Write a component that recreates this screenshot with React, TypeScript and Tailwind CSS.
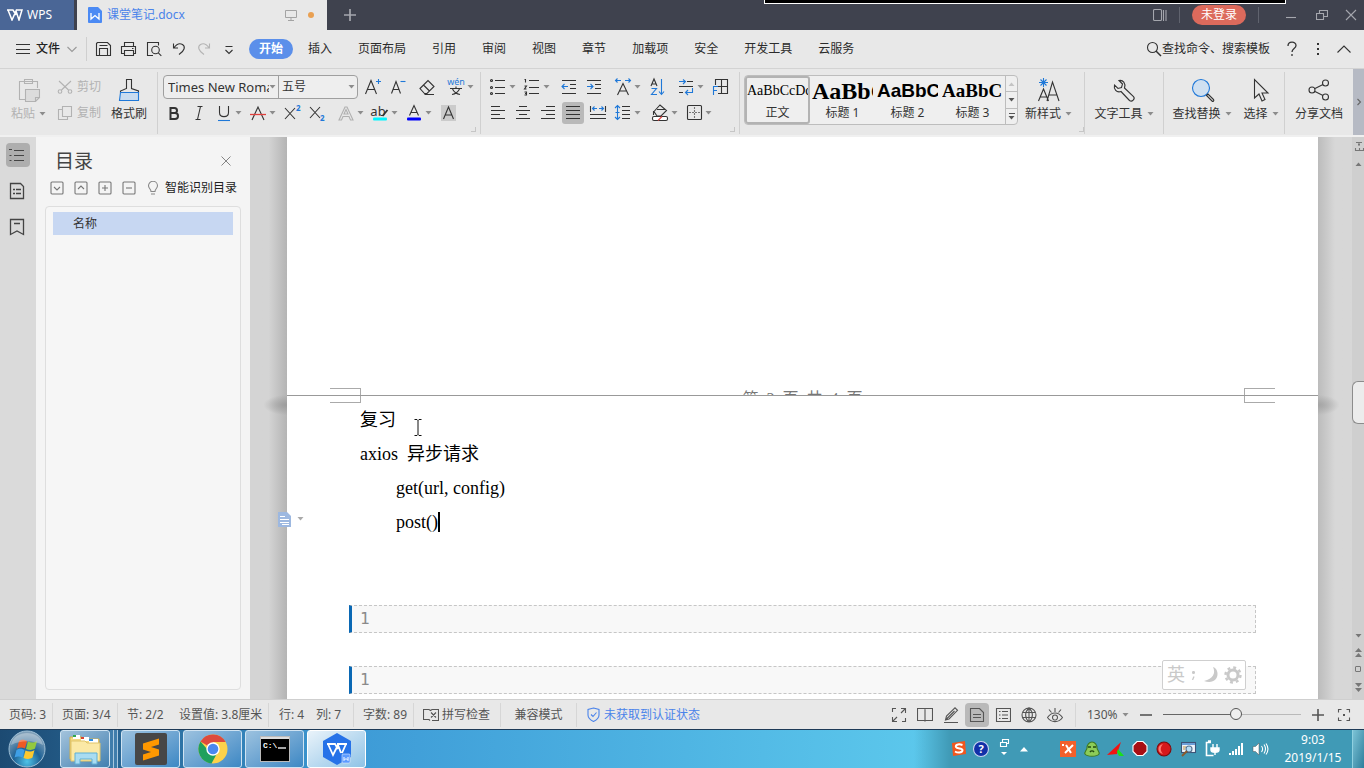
import React from 'react';
import { clsx } from 'clsx';

type IconProps = {
  size?: number;
  className?: string;
  children: React.ReactNode;
};

const Icon = ({ size = 22, className, children }: IconProps) => (
  <svg
    width={size}
    height={size}
    viewBox={`0 0 ${size} ${size}`}
    fill="none"
    stroke="currentColor"
    strokeWidth="1.1"
    className={clsx('shrink-0', className)}
    aria-hidden="true"
  >
    {children}
  </svg>
);

const Caret = ({ className }: { className?: string }) => (
  <svg width="7" height="4" viewBox="0 0 7 4" className={clsx('shrink-0', className ?? 'text-[#8c8c8c]')} aria-hidden="true">
    <path d="M0.5 0h6L3.5 3.5z" fill="currentColor" />
  </svg>
);

const BLUE = '#1f78d8';

/* ---------- toolbar icons, 22px grid ---------- */

const icons = {
  save: (
    <Icon>
      <path d="M3.5 5.5l1-1h10l3 3v10h-14zM6.5 17.5v-7h8v7M6.5 7.5h8" />
    </Icon>
  ),
  print: (
    <Icon>
      <path d="M6.5 8.5v-4h9v4M6.5 15.5h-3v-7h14v7h-2M6.5 12.5h9v5h-9zM14 10.5h1.5" />
    </Icon>
  ),
  preview: (
    <Icon>
      <path d="M10 17.500h-5.500v-13h11v3" />
      <circle cx="12.5" cy="12" r="3.8" />
      <path d="M15.3 14.8l3 3" />
    </Icon>
  ),
  undo: (
    <Icon>
      <path d="M5.5 5.5V10H10M5.8 9.8C9 5.500 12 5 14.5 6.5c3 2 2.500 6-3.500 10" />
    </Icon>
  ),
  redo: (
    <Icon className="text-[#b4b4b4]">
      <path d="M16.5 5.5V10H12M16.2 9.8C13 5.5 10 5 7.5 6.500c-3 2-2.500 6 3.500 10" />
    </Icon>
  ),
  more: (
    <Icon>
      <path d="M7.5 8.5h7M7.5 12l3.500 3.500 3.500-3.500" />
    </Icon>
  ),
  growFont: (
    <Icon>
      <path d="M3.5 18L9 4.500 14.500 18M5.300 13.500h7.400" />
      <path d="M16.5 3v5M14 5.5h5" stroke={BLUE} />
    </Icon>
  ),
  shrinkFont: (
    <Icon>
      <path d="M4.5 17.5L9 5.500l4.500 12M6 13.500h6" />
      <path d="M13.5 5.5h5" stroke={BLUE} />
    </Icon>
  ),
  eraser: (
    <Icon>
      <path d="M4 12.5l8-8 6 6-7 7H8.500zM7.500 9l6 6M8.500 18.500H18" />
    </Icon>
  ),
  pinyin: (
    <Icon>
      <text x="11" y="9" textAnchor="middle" fontSize="9" fill={BLUE} stroke="none">
        wén
      </text>
      <path d="M5 12.5h12M11 10.5v2M7.5 13c1.500 3 4 5 7.500 5.500M14.500 13c-1.500 3-4 5-7.500 5.500" />
    </Icon>
  ),
  bold: (
    <Icon>
      <path d="M7.5 6v11H12a3 3 0 000-6H7.500h4a2.500 2.500 0 000-5z" strokeWidth="2" />
    </Icon>
  ),
  italic: (
    <Icon>
      <path d="M9.5 4.5h5M7.5 17.5h5M12.5 4.5l-3 13" />
    </Icon>
  ),
  underline: (
    <Icon>
      <path d="M6.5 4v6.500c0 5.500 9 5.500 9 0V4" />
      <path d="M5 18.5h12" stroke={BLUE} />
    </Icon>
  ),
  strike: (
    <Icon>
      <path d="M5 18L11 5l6 13" />
      <path d="M3 12.500h16" stroke="#e0403c" strokeWidth="1.3" />
    </Icon>
  ),
  superscript: (
    <Icon>
      <path d="M4 6l10 11M14 6L4 17" />
      <text x="15" y="9" fontSize="8" fontWeight="bold" fill={BLUE} stroke="none">2</text>
    </Icon>
  ),
  subscript: (
    <Icon>
      <path d="M4 5l10 11M14 5L4 16" />
      <text x="14" y="19" fontSize="8" fontWeight="bold" fill={BLUE} stroke="none">2</text>
    </Icon>
  ),
  textEffect: (
    <Icon className="text-[#b0b0b0]">
      <path d="M4 18L10 5h2l6 13h-2.500L14 14.500H8L6.500 18zM9 12h4l-2-4.500z" />
    </Icon>
  ),
  highlight: (
    <Icon>
      <text x="9" y="14" textAnchor="middle" fontSize="13" fill="#333" stroke="none">ab</text>
      <path d="M13.5 14l5-6" strokeWidth="1.8" />
      <rect x="4" y="15.5" width="14" height="3" rx="1" fill="#00f6ff" stroke="none" />
    </Icon>
  ),
  fontColor: (
    <Icon>
      <path d="M6.5 13.5L11 3.500l4.500 10M8 10.500h6" />
      <rect x="4" y="15.5" width="14" height="3" rx="1" fill="#0000fa" stroke="none" />
    </Icon>
  ),
  shading: (
    <Icon>
      <rect x="4" y="3" width="15" height="16" fill="#cbcbcb" stroke="none" />
      <path d="M6.5 17l5-12 5 12M8.300 13h6.400" />
    </Icon>
  ),
  bullets: (
    <Icon>
      <path d="M8 4.5h10M8 11.5h10M8 17.5h10" />
      <circle cx="4.5" cy="4.5" r="1" />
      <circle cx="4.5" cy="11.5" r="1" />
      <circle cx="4.5" cy="17.5" r="1" />
    </Icon>
  ),
  numbered: (
    <Icon>
      <path d="M8 4.5h10M8 11.5h10M8 17.5h10" />
      <path d="M3.5 3.5h1v3M3.5 10h2l-2 3h2M3.5 16h2v3h-2M4 17.5h1.500" />
    </Icon>
  ),
  outdent: (
    <Icon>
      <path d="M4 4.5h14M12 8.5h6M12 12.5h6M4 17.5h14" />
      <path d="M10 10.5H4M6.5 8L4 10.500 6.500 13" stroke={BLUE} />
    </Icon>
  ),
  indent: (
    <Icon>
      <path d="M4 4.5h14M12 8.5h6M12 12.5h6M4 17.5h14" />
      <path d="M4 10.5h6M7.5 8l2.500 2.500L7.500 13" stroke={BLUE} />
    </Icon>
  ),
  textScale: (
    <Icon>
      <path d="M5.5 19L11 7.500 16.500 19M7.500 15h7" />
      <path d="M9 4.5H3.5M5.5 2.5l-2 2 2 2M13 4.5h5.500M16.500 2.500l2 2-2 2" stroke={BLUE} />
    </Icon>
  ),
  sort: (
    <Icon>
      <path d="M5 10l3-7 3 7M6 8h4" />
      <path d="M5.5 12.5h5l-5 6H11M15.5 3v15M13 15.5l2.500 3 2.500-3" stroke={BLUE} />
    </Icon>
  ),
  tabs: (
    <Icon>
      <path d="M12 5.5h6M4 10.5h14M4 16.5h4" />
      <path d="M4 5.5h6M8 3.500l2.500 2L8 8M17.500 12v4.500H11M13 14l-2.500 2.500L13 19" stroke={BLUE} />
    </Icon>
  ),
  tableGrid: (
    <Icon>
      <path d="M6.5 9V3.5h12v14H9M12.5 3.5v14M9 10.5h9.500" />
      <path d="M4.5 19v-8.500H9M4.5 14.500H8" stroke={BLUE} />
    </Icon>
  ),
  alignLeft: (
    <Icon>
      <path d="M4 4.5h9M4 8.5h14M4 12.5h9M4 16.5h14" />
    </Icon>
  ),
  alignCenter: (
    <Icon>
      <path d="M7 4.5h8M4 8.5h14M7 12.5h8M4 16.5h14" />
    </Icon>
  ),
  alignRight: (
    <Icon>
      <path d="M9 4.5h9M4 8.5h14M9 12.5h9M4 16.5h14" />
    </Icon>
  ),
  justify: (
    <Icon>
      <path d="M4 4.5h14M4 8.5h14M4 12.5h14M4 16.5h14" />
    </Icon>
  ),
  distribute: (
    <Icon>
      <path d="M3.5 4v6M18.5 4v6M3 12.5h16M3 16.5h16" />
      <path d="M10 6.5H5.5M7.500 4.500l-2 2 2 2M12 6.500h4.500M14.500 4.500l2 2-2 2" stroke={BLUE} />
    </Icon>
  ),
  lineSpacing: (
    <Icon>
      <path d="M10 4.5h8M10 8.5h8M10 12.5h8M10 16.5h8" />
      <path d="M5.5 4v13M3 6l2.500-2.500L8 6M3 15l2.500 2.500L8 15M3.500 10.500h4" stroke={BLUE} />
    </Icon>
  ),
  bucket: (
    <Icon>
      <path d="M5 9.500l6-6.500 6.500 5.500L12 14H8zM8 7.500h8.500M4.500 9v4" />
      <rect x="3.5" y="14.5" width="15" height="4" rx="1.5" fill="#fff" />
      <path d="M9 18.5l4-4" stroke="#e0403c" />
    </Icon>
  ),
  borders: (
    <Icon>
      <rect x="4.5" y="3.5" width="14" height="14" rx="1" />
      <path d="M11.5 5v11M6 10.5h11" strokeDasharray="2 1" stroke="#777" />
    </Icon>
  ),
};

/* ---------- title bar ---------- */

const WpsMark = () => (
  <svg width="16" height="12" viewBox="0 0 16 12" fill="none" stroke="currentColor" strokeWidth="1.5" aria-hidden="true">
    <path d="M0 1h6l3 5M1 1l4 10 4-9 3 9 3-10H9" />
  </svg>
);

const TitleBar = () => (
  <header className="flex h-[30px] shrink-0 bg-[#3f424e] text-[#a5a7ae]">
    <button className="flex w-[74px] items-center gap-1 bg-[#4a6696] pl-[7px] text-white">
      <WpsMark />
      <span>WPS</span>
    </button>
    <div className="ml-[3px] flex w-[250px] items-center bg-[#e8e8e8] pl-[11px] pr-[13px] text-[#4a83ea]">
      <svg width="14" height="16" viewBox="0 0 14 16" aria-hidden="true">
        <path d="M1 0h9l4 4v11a1 1 0 01-1 1H1a1 1 0 01-1-1V1a1 1 0 011-1z" fill="#4b8af4" />
        <path d="M3 6v6l4-3.500 4 3.500V6" fill="none" stroke="#fff" strokeWidth="1.3" />
      </svg>
      <span className="ml-[5px] flex-1">课堂笔记.docx</span>
      <svg width="12" height="12" viewBox="0 0 12 12" fill="none" stroke="#a3a3a3" aria-hidden="true">
        <path d="M.5 1.5h11v7H.5zM6 8.5v3M3 11.5h6" />
      </svg>
      <span className="ml-[11px] size-[6px] rounded-full bg-[#e9a052]" />
    </div>
    <button aria-label="新建" className="flex w-[46px] items-center justify-center">
      <Icon size={14}>
        <path d="M1 7h12M7 1v12" strokeWidth="1.7" />
      </Icon>
    </button>
    <div className="ml-auto flex items-center">
      <button aria-label="侧栏" className="w-[38px]">
        <Icon size={14} className="mx-auto">
          <rect x=".5" y="1.5" width="8" height="11" rx="1" />
          <path d="M10.5 2v11M13 2v11" />
        </Icon>
      </button>
      <span className="h-4 w-px bg-[#60636e]" />
      <button className="mx-3 h-5 rounded-full bg-[#dc6a5c] px-[9px] text-white">未登录</button>
      <span className="h-4 w-px bg-[#60636e]" />
      <button aria-label="最小化" className="ml-4 w-[31px]">
        <Icon size={12} className="mx-auto">
          <path d="M1 8.5h10" />
        </Icon>
      </button>
      <button aria-label="还原" className="w-[31px]">
        <Icon size={12} className="mx-auto">
          <path d="M.5 4.5h7v6h-7zM3.5 4V1.5h8v6H8" />
        </Icon>
      </button>
      <button aria-label="关闭" className="w-[27px]">
        <Icon size={12} className="mx-auto">
          <path d="M1 1l10 10M11 1L1 11" />
        </Icon>
      </button>
    </div>
  </header>
);

/* ---------- menu bar ---------- */

const tabs = ['插入', '页面布局', '引用', '审阅', '视图', '章节', '加载项', '安全', '开发工具', '云服务'];

const quickTools = [
  { label: '保存', icon: icons.save },
  { label: '打印', icon: icons.print },
  { label: '打印预览', icon: icons.preview },
  { label: '撤销', icon: icons.undo },
  { label: '恢复', icon: icons.redo },
  { label: '更多', icon: icons.more },
];

const MenuBar = () => (
  <nav className="flex h-[39px] shrink-0 items-center border-b border-[#d3d3d3]">
    <button className="flex items-center pl-[15px]">
      <Icon size={16}>
        <path d="M1 3.5h14M1 8.5h14M1 12.5h14" />
      </Icon>
      <span className="ml-[5px] font-medium text-[#222]">文件</span>
      <Icon size={12} className="ml-[6px] text-[#999]">
        <path d="M1.500 4l4.500 4.500L10.500 4" />
      </Icon>
    </button>
    <span className="ml-2 mr-1 h-6 w-px bg-[#cfcfcf]" />
    {quickTools.map((t) => (
      <button key={t.label} aria-label={t.label} className="flex w-[25px] justify-center">
        {t.icon}
      </button>
    ))}
    <button className="ml-2 mr-[2px] h-5 rounded-full bg-[#5b8fea] px-[10px] font-bold text-white">开始</button>
    {tabs.map((t) => (
      <button key={t} className="px-[13px] text-[#2b2b2b]">
        {t}
      </button>
    ))}
    <label className="ml-auto flex items-center">
      <Icon size={16}>
        <circle cx="6.5" cy="6.5" r="5" />
        <path d="M10 10l5 5" strokeWidth="1.5" />
      </Icon>
      <input
        className="w-[109px] bg-transparent text-[#2b2b2b] outline-none placeholder:text-[#2b2b2b]"
        placeholder="查找命令、搜索模板"
      />
    </label>
    <div className="flex items-center pl-2 pr-[7px]">
      <button aria-label="帮助" className="w-[26px]">
        <Icon size={16} className="mx-auto">
          <path d="M4 5c0-5 8-5 8-.5 0 3-4 3-4 6.500M8 13v2" strokeWidth="1.3" />
        </Icon>
      </button>
      <button aria-label="更多选项" className="w-[26px]">
        <Icon size={16} className="mx-auto">
          <path d="M8 2v2M8 7v2M8 12v2" strokeWidth="2" />
        </Icon>
      </button>
      <button aria-label="收起功能区" className="w-[26px]">
        <Icon size={16} className="mx-auto">
          <path d="M1.5 11.5L8 5l6.500 6.500" />
        </Icon>
      </button>
    </div>
  </nav>
);

/* ---------- ribbon ---------- */

type ToolItem = {
  label: string;
  icon: React.ReactNode;
  width?: string;
  caret?: boolean;
  active?: boolean;
};

const Tool = ({ label, icon, width = 'w-[25px]', caret, active }: ToolItem) => (
  <button aria-label={label} title={label} className={clsx('flex shrink-0 items-center', width)}>
    <span className={clsx('rounded-[3px]', active && 'bg-[#b9b9b9]')}>{icon}</span>
    {caret && <Caret />}
  </button>
);

const BigTool = ({ label, icon, caret, className }: { label: string; icon: React.ReactNode; caret?: boolean; className?: string }) => (
  <button className={clsx('flex shrink-0 flex-col items-center pt-[7px]', className)}>
    {icon}
    <span className="flex h-5 items-center gap-1 whitespace-nowrap">
      {label}
      {caret && <Caret />}
    </span>
  </button>
);

const Divider = () => <span className="mt-[3px] h-[62px] w-px shrink-0 bg-[#d0d0d0]" />;

const Corner = () => <span className="mb-[3px] size-[5px] shrink-0 self-end border-b border-r border-[#c6c6c6]" />;

const fontRow: ToolItem[] = [
  { label: '增大字号', icon: icons.growFont },
  { label: '减小字号', icon: icons.shrinkFont, width: 'w-[29px]' },
  { label: '清除格式', icon: icons.eraser, width: 'w-[29px]' },
  { label: '拼音指南', icon: icons.pinyin, width: 'w-[34px]', caret: true },
];

const styleRow: ToolItem[] = [
  { label: '加粗', icon: icons.bold },
  { label: '倾斜', icon: icons.italic },
  { label: '下划线', icon: icons.underline, width: 'w-[34px]', caret: true },
  { label: '删除线', icon: icons.strike, width: 'w-[34px]', caret: true },
  { label: '上标', icon: icons.superscript },
  { label: '下标', icon: icons.subscript, width: 'w-[29px]' },
  { label: '文字效果', icon: icons.textEffect, width: 'w-[34px]', caret: true },
  { label: '突出显示', icon: icons.highlight, width: 'w-[34px]', caret: true },
  { label: '字体颜色', icon: icons.fontColor, width: 'w-[34px]', caret: true },
  { label: '字符底纹', icon: icons.shading },
];

const listRow: ToolItem[] = [
  { label: '项目符号', icon: icons.bullets, width: 'w-[34px]', caret: true },
  { label: '编号', icon: icons.numbered, width: 'w-[37px]', caret: true },
  { label: '减少缩进', icon: icons.outdent },
  { label: '增加缩进', icon: icons.indent, width: 'w-[29px]' },
  { label: '中文版式', icon: icons.textScale, width: 'w-[34px]', caret: true },
  { label: '排序', icon: icons.sort, width: 'w-[29px]' },
  { label: '制表位', icon: icons.tabs, width: 'w-[34px]', caret: true },
  { label: '表格', icon: icons.tableGrid },
];

const alignRow: ToolItem[] = [
  { label: '左对齐', icon: icons.alignLeft },
  { label: '居中', icon: icons.alignCenter },
  { label: '右对齐', icon: icons.alignRight },
  { label: '两端对齐', icon: icons.justify, active: true },
  { label: '分散对齐', icon: icons.distribute },
  { label: '行距', icon: icons.lineSpacing, width: 'w-[37px]', caret: true },
  { label: '底纹颜色', icon: icons.bucket, width: 'w-[34px]', caret: true },
  { label: '边框', icon: icons.borders, width: 'w-[34px]', caret: true },
];

const styles = [
  { name: '正文', sample: 'AaBbCcDd', font: "font-['Liberation_Serif',serif] text-[14px]", active: true },
  { name: '标题 1', sample: 'AaBbC', font: "font-['Liberation_Serif',serif] text-[24px] font-bold" },
  { name: '标题 2', sample: 'AaBbC', font: "font-['Liberation_Sans',sans-serif] text-[19px] font-bold" },
  { name: '标题 3', sample: 'AaBbC', font: "font-['Liberation_Serif',serif] text-[19px] font-bold" },
];

const StyleGallery = () => (
  <div className="mt-[6px] flex h-[50px] shrink-0 rounded-[4px] border border-[#bdbdbd] bg-[#efefef]">
    {styles.map((s) => (
      <button
        key={s.name}
        className={clsx(
          'flex w-[65px] flex-col items-center rounded-[3px] border-2',
          s.active ? 'border-[#b3b3b3]' : 'border-transparent'
        )}
      >
        <span className={clsx('flex h-[28px] w-full items-center overflow-hidden leading-7 text-black', s.font)}>{s.sample}</span>
        <span className="leading-[18px]">{s.name}</span>
      </button>
    ))}
    <div className="flex w-3 flex-col divide-y divide-[#bdbdbd] border-l border-[#bdbdbd]">
      <button aria-label="上一行" className="flex flex-1 items-center justify-center">
        <Caret className="rotate-180 text-[#c4c4c4]" />
      </button>
      <button aria-label="下一行" className="flex flex-1 items-center justify-center">
        <Caret className="text-[#555]" />
      </button>
      <button aria-label="全部样式" className="flex flex-1 flex-col items-center justify-center gap-[2px]">
        <span className="h-px w-[6px] bg-[#555]" />
        <Caret className="text-[#555]" />
      </button>
    </div>
  </div>
);

const Ribbon = () => (
  <section className="flex h-[68px] shrink-0 overflow-hidden border-b-2 border-[#f0f0f0]">
    <BigTool
      className="w-[57px] text-[#b2b2b2]"
      label="粘贴"
      caret
      icon={
        <Icon size={28}>
          <path d="M11 23.5H4.500v-18h18V12M9.500 3.500h8v4h-8z" />
          <path d="M10.5 13.5h14v8l-4 4h-10z" fill="#dcdcdc" />
          <path d="M24.5 21.5h-4v4" />
        </Icon>
      }
    />
    <div className="flex w-11 shrink-0 flex-col gap-1 whitespace-nowrap pt-[7px] text-[#b2b2b2]">
      <button className="flex h-[22px] items-center gap-1">
        <Icon size={16}>
          <path d="M2 2l9.500 9M14 2L4.500 11" />
          <circle cx="3" cy="12.5" r="1.8" />
          <circle cx="13" cy="12.5" r="1.8" />
        </Icon>
        剪切
      </button>
      <button className="flex h-[22px] items-center gap-1">
        <Icon size={16}>
          <path d="M5.5 1.5h9v10h-9zM5 4.5H1.500v10h9v-3" />
        </Icon>
        复制
      </button>
    </div>
    <BigTool
      className="w-[56px]"
      label="格式刷"
      icon={
        <Icon size={28}>
          <path d="M5.5 17v-2l6-2.500v-9h5v9l7 2.500v2" />
          <path d="M5.5 16.5h18v8H4.500z" fill="#c9dcf0" stroke={BLUE} />
        </Icon>
      }
    />
    <Divider />
    <div className="flex w-[322px] shrink-0 flex-col gap-[2px] pl-[5px] pt-[6px]">
      <div className="flex h-6 items-center">
        <div className="mr-1 flex h-6 w-[195px] shrink-0 divide-x divide-[#9f9f9f] rounded-[4px] border border-[#9f9f9f] bg-[#eeeeee]">
          <label className="flex w-[115px] items-center pr-[2px]">
            <select aria-label="字体" className="min-w-0 flex-1 appearance-none overflow-hidden pl-1 text-[13px] text-[#333] outline-none">
              <option>Times New Roman</option>
            </select>
            <Caret />
          </label>
          <label className="flex flex-1 items-center pr-[2px]">
            <select aria-label="字号" className="min-w-0 flex-1 appearance-none pl-[3px] text-[#333] outline-none">
              <option>五号</option>
            </select>
            <Caret />
          </label>
        </div>
        {fontRow.map((t) => (
          <Tool key={t.label} {...t} />
        ))}
      </div>
      <div className="flex h-6 items-center">
        {styleRow.map((t) => (
          <Tool key={t.label} {...t} />
        ))}
      </div>
      <div className="flex justify-end pr-1">
        <Corner />
      </div>
    </div>
    <Divider />
    <div className="flex w-[258px] shrink-0 flex-col gap-[2px] pl-[6px] pt-[6px]">
      <div className="flex h-6 items-center">
        {listRow.map((t) => (
          <Tool key={t.label} {...t} />
        ))}
      </div>
      <div className="flex h-6 items-center">
        {alignRow.map((t) => (
          <Tool key={t.label} {...t} />
        ))}
      </div>
      <div className="flex justify-end pr-1">
        <Corner />
      </div>
    </div>
    <Divider />
    <div className="flex shrink-0 pl-1">
      <StyleGallery />
      <BigTool
        className="w-[61px]"
        label="新样式"
        caret
        icon={
          <Icon size={28}>
            <path d="M3.5 25l5-12 5 12M5 21h7M12 25l5.500-19L24 25M13.500 19h9" />
            <path d="M8.5 2v9M4 6.5h9M5.500 3.500l6 6M11.500 3.500l-6 6" stroke={BLUE} />
          </Icon>
        }
      />
      <Corner />
    </div>
    <Divider />
    <BigTool
      className="w-[78px]"
      label="文字工具"
      caret
      icon={
        <Icon size={28}>
          <path d="M9 4.500l3.500 3.500-1 3.500-3.500 1L4.500 9C3.500 13 6.500 17 11 15.500l8.500 9c2.500 2 6-1.500 4-4l-9-8.500C16 7.500 13 3.500 9 4.500z" />
        </Icon>
      }
    />
    <Divider />
    <BigTool
      className="w-[76px]"
      label="查找替换"
      caret
      icon={
        <Icon size={28}>
          <circle cx="13" cy="12" r="8.500" fill="#cfe0f1" stroke={BLUE} />
          <path d="M18.5 19.5L20 18l5.500 5.500c1 1-.5 2.500-1.500 1.500z" />
        </Icon>
      }
    />
    <BigTool
      className="w-[42px]"
      label="选择"
      caret
      icon={
        <Icon size={28}>
          <path d="M7.5 3.5V22l4.500-4 3 7 3-1.500-3-6.500h6z" />
        </Icon>
      }
    />
    <span className="w-[3px]" />
    <Divider />
    <BigTool
      className="w-[68px]"
      label="分享文档"
      icon={
        <Icon size={28}>
          <circle cx="7" cy="14" r="3" />
          <circle cx="20.5" cy="7" r="3" />
          <circle cx="20.5" cy="21" r="3" />
          <path d="M10 12.5l8-4M10 15.5l8 4" />
        </Icon>
      }
    />
    <button aria-label="向右滚动" className="ml-auto w-[11px] shrink-0 bg-[#b6bac4] text-[#666]">
      <Icon size={8} className="mx-auto">
        <path d="M2.5 1l3 3-3 3" />
      </Icon>
    </button>
  </section>
);

/* ---------- navigation panel ---------- */

const SideStrip = () => (
  <div className="flex w-9 shrink-0 flex-col items-center gap-3 bg-[#dadada] pt-[6px] text-[#444]">
    <button aria-label="目录" className="size-6 rounded-[4px] bg-[#aeaeae]">
      <Icon size={24}>
        <path d="M8 7.5h10M8 12.5h10M8 17.5h10M3 6.5h3M3.500 12.500h2M3.500 17.500h2" />
      </Icon>
    </button>
    <button aria-label="章节" className="size-6">
      <Icon size={24}>
        <path d="M4.5 4.5h10l3 3v12h-13zM7 10.5h2M10 10.5h5M7 14.5h2M10 14.5h5" strokeWidth="1.3" />
      </Icon>
    </button>
    <button aria-label="书签" className="size-6">
      <Icon size={24}>
        <path d="M4.5 4.5h13v15L11 16l-6.500 3.500zM8 8.5h6" strokeWidth="1.3" />
      </Icon>
    </button>
  </div>
);

const outlineTools = [
  { label: '全部展开', d: 'M4 6l3 3 3-3' },
  { label: '全部收起', d: 'M4 8l3-3 3 3' },
  { label: '升级', d: 'M4 7h6M7 4v6' },
  { label: '降级', d: 'M4 7h6' },
];

const OutlinePanel = () => (
  <aside className="flex w-[214px] shrink-0 flex-col bg-[#f4f4f4] px-[9px] pb-[9px]">
    <div className="flex h-12 items-center justify-between pl-[10px] pr-[9px]">
      <h2 className="text-[19px] text-[#444]">目录</h2>
      <button aria-label="关闭" className="text-[#777]">
        <Icon size={12}>
          <path d="M1.5 1.5l9 9M10.5 1.5l-9 9" strokeWidth=".9" />
        </Icon>
      </button>
    </div>
    <div className="-mt-1 flex h-[14px] items-center gap-[10px] whitespace-nowrap pl-[5px] text-[#777]">
      {outlineTools.map((t) => (
        <button key={t.label} aria-label={t.label}>
          <Icon size={14}>
            <rect x="1" y="1" width="12" height="12" rx="1" />
            <path d={t.d} />
          </Icon>
        </button>
      ))}
      <button className="flex items-center gap-[5px] text-[#222]">
        <Icon size={14} className="text-[#888]">
          <path d="M5 10.5C5 8 2.500 7.500 2.500 4.800a4.500 4.500 0 019 0C11.500 7.500 9 8 9 10.500zM5 13h4" />
        </Icon>
        智能识别目录
      </button>
    </div>
    <ul className="mt-[11px] flex-1 rounded-[4px] border border-[#dedede] bg-[#f6f6f6] px-[7px] pt-[5px]">
      <li>
        <a href="#heading" className="block h-[23px] bg-[#c7d7f2] pl-5 leading-[23px] text-[#333]">
          名称
        </a>
      </li>
    </ul>
  </aside>
);

/* ---------- document ---------- */

const CodeBlock = ({ line }: { line: number }) => (
  <pre className="h-7 border border-l-[3px] border-dashed border-[#c6c6c6] border-l-[#0a68b4] bg-[#f8f8f8] pl-2 font-['DejaVu_Sans_Mono','Liberation_Mono',monospace] text-[16px] leading-[26px] text-[#8a8a8a] [border-left-style:solid]">
    {line}
  </pre>
);

const ImeBar = () => (
  <div className="absolute bottom-[9px] right-[72px] flex h-[30px] w-[84px] items-center gap-1 rounded-[2px] border border-[#cfcfcf] bg-white pl-1 text-[18px] text-[#c9c9c9]">
    <span>英</span>
    <Icon size={9}>
      <circle cx="4.5" cy="1.5" r="1" fill="currentColor" />
      <path d="M5 5.5L3.500 9" strokeWidth="1.3" />
    </Icon>
    <Icon size={18}>
      <path d="M11 1c3 6 0 12-9 14 8 3 14-1 13.500-8C15 4 13.500 1.500 11 1z" fill="currentColor" stroke="none" />
    </Icon>
    <Icon size={18}>
      <circle cx="9" cy="9" r="5" strokeWidth="3" />
      <circle cx="9" cy="9" r="7.500" strokeWidth="2.400" strokeDasharray="2.900 2.990" />
    </Icon>
  </div>
);

const Page = () => (
  <main className="relative flex min-w-0 flex-1 flex-col bg-white font-['Liberation_Serif','Noto_Sans_CJK_SC',serif] text-[18px] text-black">
    <div className="flex h-[259px] shrink-0 items-end justify-between border-b border-[#999] px-[43px]">
      <span className="h-[7px] w-[31px] border-r border-t border-[#aaa]" />
      {/* page number line, cut by the collapsed page gap */}
      <span className="flex h-[5px] items-start gap-2 overflow-hidden text-[16px] leading-[18px] text-[#777]">
        <span>第</span>
        <span>3</span>
        <span>页</span>
        <span>共</span>
        <span>4</span>
        <span>页</span>
      </span>
      <span className="h-[7px] w-[31px] border-l border-t border-[#aaa]" />
    </div>
    <div className="flex h-[7px] shrink-0 justify-between px-[43px]">
      <span className="w-[31px] border-b border-r border-[#aaa]" />
      <span className="w-[31px] border-b border-l border-[#aaa]" />
    </div>
    <article className="px-[62px]">
      <div className="px-[11px] leading-[34px]">
        <p className="relative">
          复习
          <svg width="8" height="17" viewBox="0 0 8 17" fill="none" stroke="#111" className="absolute left-[54px] top-4" aria-hidden="true">
            <path d="M.5 .5H3l1 1 1-1h2.500M4 1.500v14M.5 16.500H3l1-1 1 1h2.500" />
          </svg>
        </p>
        <p className="whitespace-pre">axios  异步请求</p>
        <p className="pl-9">get(url, config)</p>
        <p className="relative flex items-center pl-9">
          post()
          <span className="h-5 w-[2px] bg-black" />
          <button aria-label="段落布局" className="absolute -left-[83px] top-[6px] flex items-center gap-1">
            <Icon size={16} className="text-white">
              <path d="M1 1h9l4 4v11H1z" fill="#9db8e0" stroke="none" />
              <path d="M3 5.5h5M3 8.5h9M3 11.5h9M5 13.5h7" />
            </Icon>
            <Caret className="text-[#aaa]" />
          </button>
        </p>
      </div>
      <div className="mt-[66px] flex flex-col gap-[33px]">
        <CodeBlock line={1} />
        <CodeBlock line={1} />
      </div>
    </article>
    <ImeBar />
  </main>
);

const PageShadow = ({ side }: { side: 'left' | 'right' }) => (
  <div
    className={clsx(
      'shrink-0 pt-[252px]',
      side === 'left'
        ? 'w-[37px] bg-linear-to-r from-[#d4d4d4] from-50% to-[#b4b4b4]'
        : 'w-[34px] bg-linear-to-r from-[#bcbcbc] to-[#d7d7d7] to-50%'
    )}
  >
    <div
      className={clsx(
        'h-8 w-full',
        side === 'left'
          ? 'bg-radial-[at_100%_50%] from-[#9c9c9c] to-transparent to-45%'
          : 'bg-radial-[at_0%_50%] from-[#a4a4a4] to-transparent to-45%'
      )}
    />
  </div>
);

const ScrollBar = () => (
  <div className="flex w-3 shrink-0 flex-col items-center bg-[#cfcfcf] text-[#777]">
    <Icon size={12} className="mt-1">
      <path d="M4 1.5h6M6 3.5h2M7 1v4M3 9.500h9M3.500 7v3M7.500 7v3M11.500 7v3" />
    </Icon>
    <Caret className="mt-[9px] rotate-180 text-[#777]" />
    <div className="flex-[211] self-stretch" />
    <div className="h-[43px] self-stretch rounded-l-[6px] border border-r-0 border-[#8c8c8c] bg-[#ececec]" />
    <div className="flex-[207] self-stretch" />
    <Caret className="text-[#777]" />
    <Icon size={12} className="mt-2">
      <path d="M3 6l3.500-4L10 6zM3 11l3.500-4 3.500 4z" fill="currentColor" stroke="none" />
    </Icon>
    <span className="mt-2 size-[6px] rounded-[1px] border border-[#777]" />
    <Icon size={12} className="mb-[6px] mt-[9px]">
      <path d="M3 2l3.500 4L10 2zM3 7l3.500 4L10 7z" fill="currentColor" stroke="none" />
    </Icon>
  </div>
);

/* ---------- status bar ---------- */

const Bar = ({ className }: { className?: string }) => <span className={clsx('h-6 w-px bg-[#d6d6d6]', className)} />;

const viewModes = [
  { label: '全屏', d: 'M10 1.5h4.500V6M14.500 1.500L10 6M6 14.500H1.500V10M1.500 14.500L6 10M1.500 5V1.500H5M14.500 11v3.500H11' },
  { label: '阅读版式', d: 'M.5 1.5h7l.5.5.5-.5h7v12h-7l-.5.5-.5-.5h-7zM8 2v12' },
  { label: '写作模式', d: 'M1 15.500h14M2.500 13l1-4L12 .8l2.500 2.500L6 12zM3 12.500L11.500 4' },
  { label: '页面视图', d: 'M1.5 1.5h9l4 4v9h-13zM4 7.5h8M4 10.5h8', active: true },
  { label: '大纲', d: 'M1.5 1.5h14v13h-14zM4 4.5h1.500M7 4.500h6M4 8h1.500M7 8h6M4 11.500h1.500M7 11.500h6' },
  { label: 'Web版式', d: 'M8 1a7 7 0 100 14A7 7 0 008 1zM8 1C3.500 5 3.500 11 8 15M8 1c4.500 4 4.500 10 0 14M2 5.500h12M2 10.500h12M8 1v14' },
  { label: '护眼模式', d: 'M.5 10.500c4-6 11-6 15 0-4 5.500-11 5.500-15 0zM8 8a2.500 2.500 0 100 5 2.500 2.500 0 000-5zM8 1v4M2 2.500L4.500 5.500M14 2.500L11.500 5.500' },
];

const StatusBar = () => (
  <footer className="flex h-[30px] shrink-0 items-center whitespace-nowrap border-t border-[#cfcfcf] text-[#555]">
    <span className="w-[52px] pl-[9px]">页码: 3</span>
    <Bar />
    <span className="w-16 pl-[9px]">页面: 3/4</span>
    <Bar />
    <span className="w-[52px] pl-[9px]">节: 2/2</span>
    <span className="w-[98px] pl-[9px]">设置值: 3.8厘米</span>
    <Bar />
    <span className="w-[37px] pl-[10px]">行: 4</span>
    <span className="w-[47px] pl-[10px]">列: 7</span>
    <Bar />
    <span className="w-[59px] pl-[9px]">字数: 89</span>
    <Bar />
    <button className="flex w-[86px] items-center gap-[3px] pl-[9px]">
      <Icon size={16}>
        <path d="M7 13.5l-1-1H.5v-10H6l1.500 1 1.500-1h6.500v11H9M8 5.500l5 5M13 5.500l-5 5" />
      </Icon>
      拼写检查
    </button>
    <Bar />
    <span className="w-[75px] text-center">兼容模式</span>
    <Bar />
    <a href="#auth" className="flex items-center gap-[3px] pl-[9px] text-[#4a83ea]">
      <Icon size={15}>
        <path d="M7.5 1L13 2.500V8c0 3-2.500 5-5.500 6.500C4.500 13 2 11 2 8V2.500zM5 7.500l2 2L10.500 5.500" />
      </Icon>
      未获取到认证状态
    </a>
    <div className="ml-auto flex items-center">
      {viewModes.map((v) => (
        <button key={v.label} aria-label={v.label} className="flex w-[26px] justify-center">
          <span className={clsx('flex size-6 items-center justify-center rounded-[4px]', v.active && 'bg-[#b9b9b9]')}>
            <Icon size={16}>
              <path d={v.d} />
            </Icon>
          </span>
        </button>
      ))}
      <Bar className="ml-[7px]" />
      <button className="flex w-[57px] items-center gap-1 pl-[11px]">
        130% <Caret />
      </button>
      <button aria-label="缩小" className="w-[26px]">
        <Icon size={16} className="mx-auto">
          <path d="M2 8h12" strokeWidth="1.6" />
        </Icon>
      </button>
      <input
        type="range"
        aria-label="显示比例"
        min={0}
        max={100}
        defaultValue={53}
        className="mx-1 h-4 w-[138px] appearance-none bg-transparent [&::-webkit-slider-runnable-track]:h-px [&::-webkit-slider-runnable-track]:bg-linear-to-r [&::-webkit-slider-runnable-track]:from-[#666] [&::-webkit-slider-runnable-track]:from-50% [&::-webkit-slider-runnable-track]:to-[#b9b9b9] [&::-webkit-slider-runnable-track]:to-50% [&::-webkit-slider-thumb]:-mt-[6px] [&::-webkit-slider-thumb]:size-3 [&::-webkit-slider-thumb]:appearance-none [&::-webkit-slider-thumb]:rounded-full [&::-webkit-slider-thumb]:border [&::-webkit-slider-thumb]:border-[#555] [&::-webkit-slider-thumb]:bg-[#f0f0f0]"
      />
      <button aria-label="放大" className="w-[26px]">
        <Icon size={16} className="mx-auto">
          <path d="M2 8h12M8 2v12" strokeWidth="1.6" />
        </Icon>
      </button>
      <button aria-label="适合页面" className="mr-[7px] w-[26px]">
        <Icon size={16} className="mx-auto">
          <path d="M2.5 5.5v-3h3M10.5 2.5h3v3M13.5 10.5v3h-3M5.5 13.5h-3v-3" />
          <path d="M7 8h2" strokeWidth="2" />
        </Icon>
      </button>
    </div>
  </footer>
);

/* ---------- windows taskbar ---------- */

const StartOrb = () => (
  <svg width="38" height="38" viewBox="0 0 38 38" aria-hidden="true">
    <defs>
      <radialGradient id="orb" cx="50%" cy="85%" r="75%">
        <stop offset="0" stopColor="#4fc3e8" />
        <stop offset=".5" stopColor="#1f6296" />
        <stop offset="1" stopColor="#7f9fb8" />
      </radialGradient>
    </defs>
    <circle cx="19" cy="19" r="18" fill="url(#orb)" stroke="#9fc0d6" />
    <path d="M11 11c3-2 5-1.500 8 0l-2 7.500c-3-1.500-5-1.500-8 0z" fill="#ee5a24" />
    <path d="M20 11.500c3 1.500 6 1.500 9-.5l-2 7.500c-3 2-6 1.500-9 .5z" fill="#93c83e" />
    <path d="M8.500 20c3-2 5-1.500 8 0l-2 7.500c-3-1.500-5-1.500-8 0z" fill="#3f9fe6" />
    <path d="M17.500 20.500c3 1.500 6 1.500 9-.5l-2 7.500c-3 2-6 1.500-9 .5z" fill="#fdc82f" />
    <path d="M3 15C6-1 32-1 35 15c-10-5-22-5-32 0z" fill="#fff" opacity=".3" />
  </svg>
);

const ExplorerIcon = () => (
  <svg width="34" height="32" viewBox="0 0 34 32" aria-hidden="true">
    <path d="M2 4h12l2 2h15v20H2z" fill="#f3da83" stroke="#cfae4e" />
    <path d="M5 2h7v4H5z" fill="#fff" />
    <path d="M5 2h3v2H5z" fill="#2da84f" />
    <path d="M13 4h8v4h-8z" fill="#fff" />
    <path d="M13 4h3v2h-3z" fill="#d9432f" />
    <path d="M21 6h9v4h-9z" fill="#fff" />
    <path d="M21 6h4v2h-4z" fill="#2f8fe0" />
    <path d="M3 8h14l2 2h13v18H3z" fill="#fbe9a6" stroke="#e0c56a" />
    <path d="M7 31V20h22v11h-5v-5H12v5z" fill="#a9dcf2" stroke="#5eb0d6" />
  </svg>
);

const SublimeIcon = () => (
  <svg width="32" height="32" viewBox="0 0 32 32" aria-hidden="true">
    <rect width="32" height="32" rx="2" fill="#474747" />
    <path d="M8 10.500l16-5v6L16 14l8 2.500v6l-16 5v-6l8-2.500-8-2.500z" fill="#ff9800" />
  </svg>
);

const ChromeIcon = () => (
  <svg width="30" height="30" viewBox="0 0 30 30" aria-hidden="true">
    <circle cx="15" cy="15" r="14.5" fill="#fdd24a" />
    <path d="M15 15L2.500 7.500A14.500 14.500 0 0127.700 8H15z" fill="#dd4b3e" />
    <path d="M2.500 7.500A14.500 14.500 0 0013.500 29.500l6-11-4.500-3-6-.5z" fill="#1fa05d" />
    <circle cx="15" cy="15" r="6.700" fill="#fff" />
    <circle cx="15" cy="15" r="5.300" fill="#4a88f0" />
  </svg>
);

const CmdIcon = () => (
  <svg width="30" height="26" viewBox="0 0 30 26" aria-hidden="true">
    <rect x=".5" y=".5" width="29" height="25" fill="#000" stroke="#bbb" />
    <rect x="1" y="1" width="28" height="2" fill="#ddd" />
    <text x="3" y="12" fontSize="8" fontFamily="Liberation Mono, monospace" fontWeight="bold" fill="#fff">C:\</text>
    <path d="M18 12h8" stroke="#fff" strokeWidth="1.3" />
  </svg>
);

const WpsIcon = () => (
  <svg width="30" height="32" viewBox="0 0 30 32" aria-hidden="true">
    <path d="M15 0l14 8v16l-14 8L1 24V8z" fill="#2672e8" />
    <path d="M5 11h8l3 5M6 11l5 11 5-10 3 8M24 11l-4 9M15 11h10" fill="none" stroke="#fff" strokeWidth="1.8" />
    <rect x="20" y="21" width="8" height="9" rx="1" fill="#5d9bff" stroke="#dce9ff" strokeWidth=".6" />
    <path d="M22 24v3.500l2-2 2 2V24" fill="none" stroke="#fff" />
  </svg>
);

const taskItems = [
  { label: 'Sublime Text', icon: <SublimeIcon /> },
  { label: 'Google Chrome', icon: <ChromeIcon /> },
  { label: '命令提示符', icon: <CmdIcon /> },
  { label: 'WPS 文字', icon: <WpsIcon />, active: true },
];

const trayIcons = [
  {
    label: 'X',
    icon: (
      <>
        <rect x="1" y="1" width="16" height="16" fill="#f2602c" stroke="none" />
        <path d="M7 5l5 8M14 5l-8 8M3 5h2" stroke="#fff" strokeWidth="2" />
      </>
    ),
  },
  {
    label: '安全',
    icon: (
      <>
        <path d="M2 14c-1-2 2-4 2-6 0-3 2-6 5-6s5 3 5 6c0 2 3 4 2 6-2 3-12 3-14 0z" fill="#8ccc58" stroke="#3f7a22" />
        <path d="M5 7h3M10 7h3M7 12c1-1.500 3-1.500 4 0" stroke="#22480f" strokeWidth="1.4" />
      </>
    ),
  },
  {
    label: '网络监控',
    icon: (
      <>
        <path d="M0 15L14 2l-4 12z" fill="#f21313" stroke="none" />
        <path d="M11 9l6 7h-5l-2-4z" fill="#1ae01a" stroke="none" />
      </>
    ),
  },
  {
    label: '录制',
    icon: <path d="M6 1.500h6l4 4v6l-4 4H6l-4-4v-6z" fill="#a80f14" stroke="#fff" />,
  },
  {
    label: '录音',
    icon: (
      <>
        <circle cx="9" cy="9" r="7" fill="#d6191c" stroke="#7d0b0d" />
        <path d="M8 4c-3 3-3 7 0 10-6-1-6-9 0-10z" fill="#ff7a70" stroke="none" />
      </>
    ),
  },
  {
    label: '查看',
    icon: (
      <>
        <rect x="2.500" y="2.500" width="14" height="10" fill="#eef4fb" stroke="#3c5578" />
        <path d="M3 4h13" stroke="#6b9fd8" strokeWidth="2" />
        <path d="M4 7h3M4 9h2" stroke="#c09040" />
        <circle cx="10" cy="9" r="3" fill="#b9def6" stroke="#55738f" />
        <path d="M8 11l-5 5" stroke="#8a5b2e" strokeWidth="2" />
      </>
    ),
  },
  {
    label: '电源',
    icon: (
      <>
        <path d="M8 2.500H3.500v13h7M5 1h3" stroke="#fff" strokeWidth="1.6" />
        <path d="M8 8h8v2c0 3-8 3-8 0zM10 4v4M14 4v4M12 12v3" stroke="#fff" fill="#fff" strokeWidth="1.4" />
      </>
    ),
  },
  {
    label: '信号',
    icon: <path d="M3 15v-2M6 15v-4M9 15V9M12 15V6M15 15V3" stroke="#fff" strokeWidth="2" />,
  },
  {
    label: '音量',
    icon: (
      <>
        <path d="M2 6.500h2.500L8 3v12l-3.500-3.500H2z" fill="#fff" stroke="#555" strokeWidth=".5" />
        <path d="M10.500 6c1.500 2 1.500 4 0 6M13 4.500c2 3 2 6 0 9M15 3.500c2.500 3.500 2.500 7.500 0 11" stroke="#fff" />
      </>
    ),
  },
];

const Taskbar = () => (
  <div className="flex h-[39px] shrink-0 items-center border-t border-[#1d3a57] bg-linear-to-r from-[#1c4a72] via-[#3d9ad6] via-25% to-[#5cc8ec] to-68% text-white">
    <button aria-label="开始" className="w-[60px] pl-2">
      <StartOrb />
    </button>
    <button
      aria-label="资源管理器"
      className="flex h-[38px] w-[50px] items-center justify-center rounded-[3px] border border-[#cfe3f2] bg-linear-to-br from-[#a3c3dc] to-[#4180b0]"
    >
      <ExplorerIcon />
    </button>
    <span className="h-[38px] w-1 border-r border-[#a9c8de] bg-[#3f7dab]" />
    <span className="h-[38px] w-1 border-r border-[#a9c8de] bg-[#3f7dab]" />
    <div className="ml-[3px] flex gap-[3px]">
      {taskItems.map((t) => (
        <button
          key={t.label}
          aria-label={t.label}
          className={clsx(
            'flex h-[38px] w-[59px] items-center justify-center rounded-[3px] border',
            t.active
              ? 'border-white bg-linear-to-br from-[#e9f3fa] to-[#8fc3e6]'
              : 'border-[#cfe3f2] bg-linear-to-br from-[#9cc2df] to-[#3c88c4]'
          )}
        >
          {t.icon}
        </button>
      ))}
    </div>
    <div className="ml-auto flex h-full items-center bg-linear-to-r from-transparent to-[#409ab6] to-8% pl-9">
      <button aria-label="搜狗输入法" className="w-[22px]">
        <Icon size={18}>
          <path d="M2 3l13-2 1 13-13 2z" fill="#f2561d" stroke="none" />
          <path d="M12.500 5C8 3.500 5 5 6 7s7 1 6.500 3.500-5 2.500-7.500 1" stroke="#fff" strokeWidth="2" />
        </Icon>
      </button>
      <button aria-label="帮助" className="w-[22px]">
        <Icon size={18}>
          <circle cx="9" cy="9" r="7.500" fill="#1230a8" stroke="#c9d5f0" />
          <text x="9" y="13" textAnchor="middle" fontSize="11" fontWeight="bold" fill="#fff" stroke="none">?</text>
        </Icon>
      </button>
      <button aria-label="语言栏选项" className="w-[22px]">
        <Icon size={22}>
          <path d="M6.500 4.500h6v4h-6zM8.500 4V1.500h6v4H13" stroke="#fff" />
          <path d="M7 14h6l-3 3z" fill="#fff" stroke="none" />
        </Icon>
      </button>
      <button aria-label="显示隐藏的图标" className="mr-6 w-4">
        <Icon size={16}>
          <path d="M4 10.500L8 6l4 4.500z" fill="#fff" stroke="none" />
        </Icon>
      </button>
      {trayIcons.map((t) => (
        <button key={t.label} aria-label={t.label} className="flex w-6 justify-center">
          <Icon size={18}>{t.icon}</Icon>
        </button>
      ))}
      <div className="flex w-20 flex-col items-center pl-[2px] leading-[18px]">
        <span>9:03</span>
        <span>2019/1/15</span>
      </div>
      <button aria-label="显示桌面" className="h-full w-3 border-l border-[#8fd0e0] bg-linear-to-br from-[#7cc3d6] to-[#2b7f9c]" />
    </div>
  </div>
);

export default function App() {
  return (
    <div className="relative flex h-screen flex-col overflow-hidden bg-[#e8e8e8] font-['Noto_Sans','Noto_Sans_CJK_SC',sans-serif] text-[12px] leading-4 text-[#333]">
      <TitleBar />
      <MenuBar />
      <Ribbon />
      <div className="flex min-h-0 flex-1 overflow-hidden">
        <SideStrip />
        <OutlinePanel />
        <PageShadow side="left" />
        <Page />
        <PageShadow side="right" />
        <ScrollBar />
      </div>
      <StatusBar />
      <Taskbar />
      {/* docked recorder bar peeking in from the top edge */}
      <div className="absolute right-[78px] top-0 h-1 w-[522px] border border-t-0 border-white bg-black" />
    </div>
  );
}
